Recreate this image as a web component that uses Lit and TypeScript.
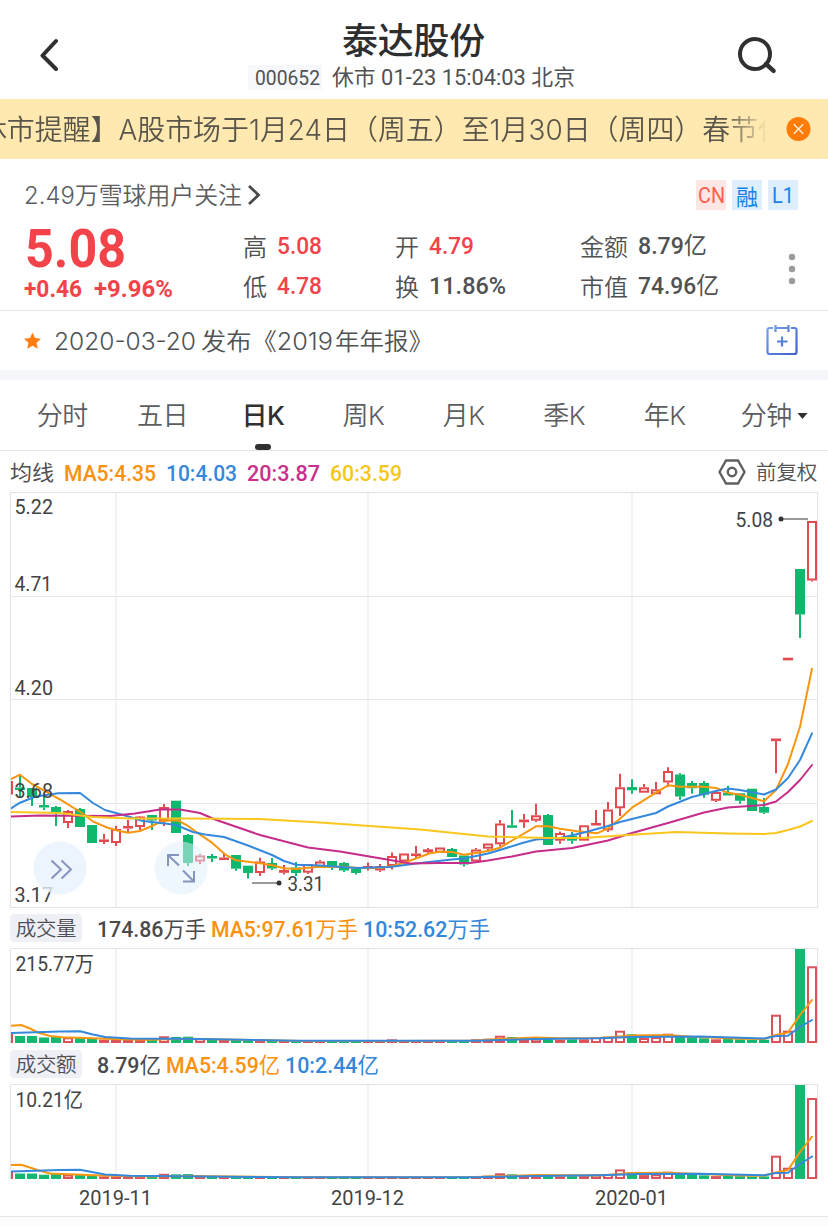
import { LitElement, html, svg, css } from "lit";
import { customElement, property } from "lit/decorators.js";

type Pt = [number, number];
// x centre, direction (r = up, g = down), high, body top, body bottom, low
type Candle = [number, "r" | "g", number, number, number, number];

const CANDLES: Candle[] = [
  [8, "r", 781, 781, 794.5, 794.5], [20, "g", 775, 787.5, 790, 798], [32, "g", 788, 788, 797, 806],
  [44, "g", 795, 805, 807.5, 810], [56, "g", 806, 807, 813.5, 826], [68, "r", 810, 811, 823, 828],
  [80, "g", 808, 809, 827, 827], [92, "g", 825, 825, 843, 843], [104, "r", 834, 839.5, 842, 844],
  [116, "r", 826, 829, 843, 846], [128, "r", 820, 826, 828.5, 832], [140, "r", 816, 816.5, 827, 830],
  [152, "g", 815, 815, 820.5, 830], [164, "r", 804, 807, 821, 826], [176, "g", 800.7, 800.7, 833, 833],
  [188, "g", 834, 835, 863, 866], [200, "r", 854, 855.5, 861.5, 864], [212, "g", 854, 856, 858.5, 862],
  [224, "r", 854, 857.5, 860, 860], [236, "g", 855, 855, 868.7, 870.7], [248, "g", 865.7, 865.7, 873, 878.5],
  [260, "r", 857.7, 861.5, 873, 876], [272, "g", 858, 863, 868.5, 870], [284, "r", 865, 870, 872.8, 874.5],
  [296, "g", 862, 867.5, 873, 876], [308, "r", 864, 864, 872.7, 874], [320, "r", 860, 861.5, 867, 867],
  [332, "g", 861, 861, 866.5, 870], [344, "g", 862, 863, 870.5, 872], [356, "g", 868, 869, 873, 874.5],
  [368, "r", 862.5, 866, 868.8, 870.5], [380, "r", 864, 866, 870.5, 872], [392, "r", 852.5, 856, 866, 869.5],
  [404, "r", 853.5, 853.5, 861.5, 861.5], [416, "r", 846, 853.5, 856, 859], [428, "r", 848, 849.3, 852.2, 854],
  [440, "r", 847.5, 847.5, 852.7, 852.7], [452, "g", 848, 849, 857, 857], [464, "g", 855.5, 855.5, 864.5, 866.5],
  [476, "r", 848, 849.5, 861.5, 861.5], [488, "r", 843.5, 843.5, 848.7, 852], [500, "r", 820, 823.5, 844.3, 846.5],
  [512, "g", 810, 825.3, 827.8, 827.8], [524, "r", 814, 819.5, 822.3, 827.7], [536, "r", 803.7, 815.3, 820.7, 822],
  [548, "g", 814, 815, 845, 845], [560, "r", 831.5, 833, 840.7, 843.7], [572, "g", 832, 835.7, 840.7, 843.7],
  [584, "r", 825.3, 825.3, 840.7, 840.7], [596, "r", 810, 823, 825.5, 825.5], [608, "r", 802, 809.5, 830.3, 832],
  [620, "r", 773.7, 787.3, 808.3, 816], [632, "g", 779.3, 787, 790.3, 793.7], [644, "r", 784, 787.3, 792.7, 792.7],
  [656, "r", 782, 789.3, 794.3, 794.3], [668, "r", 767.3, 771, 782.5, 787], [680, "g", 773, 774.5, 796.5, 799.7],
  [692, "g", 781, 783, 788.3, 793.7], [704, "g", 781, 783, 794.7, 797.7], [716, "r", 792, 792, 800.8, 802],
  [728, "g", 785.7, 792.7, 795.5, 795.5], [740, "g", 793, 793.3, 800.8, 803.7], [752, "g", 788.7, 788.7, 811, 811],
  [764, "g", 798, 807, 812.7, 814], [776, "r", 738.5, 738.5, 741.2, 773.3], [788, "r", 657.7, 657.7, 660.4, 660.4],
  [800, "g", 569, 569, 614.5, 638], [812, "r", 521, 521, 580.5, 581.5],
];

const MA5: Pt[] = [[11, 779], [20, 774.7], [32, 784], [44, 790.5], [62, 800.7], [82, 813], [93, 821.5], [105, 826.7], [117, 830.5], [128, 832.7], [140, 831], [152, 826], [162, 821], [178, 820.3], [187, 825.3], [203, 836.7], [212, 842.7], [225, 854.3], [236, 860.3], [260, 863.3], [272, 865.3], [284, 868.3], [296, 869], [317, 867], [343, 866.7], [360, 868], [380, 868], [393, 866], [407, 861.7], [430, 853.3], [440, 851.7], [452, 852], [464, 854.7], [477, 852.7], [488, 851], [500, 847.7], [513, 840], [536, 826.3], [548, 826.3], [560, 828.7], [577, 831.3], [597, 833.3], [608, 828.3], [620, 818.7], [632, 807.7], [656, 792.7], [668, 785.3], [680, 786.7], [704, 786.7], [716, 788], [728, 792.7], [740, 794.7], [752, 798], [764, 801.3], [776, 790], [788, 764], [800, 726.7], [812, 668.7]];
const MA10: Pt[] = [[11, 808.5], [20, 802.7], [35, 796.7], [58, 793.3], [80, 793], [93, 803], [105, 810], [125, 815.5], [143, 821], [165, 823.5], [176, 825], [193, 832], [205, 834.5], [224, 837], [248, 845.5], [272, 855], [284, 861], [296, 864.7], [320, 865.5], [356, 868], [390, 867], [420, 863], [452, 859.5], [464, 858.5], [488, 853.5], [500, 850], [524, 842.5], [536, 839.5], [560, 838], [584, 832.5], [608, 826], [620, 822], [656, 813], [668, 806.5], [692, 797], [716, 791], [728, 788.5], [740, 790], [764, 794.5], [776, 789.5], [788, 778], [800, 760], [812, 733.3]];
const MA20: Pt[] = [[11, 816.5], [40, 815.5], [110, 816], [135, 813.5], [160, 809.5], [180, 809.5], [200, 813], [215, 819.5], [260, 835], [308, 847.5], [340, 851.5], [390, 860], [410, 863.5], [440, 863], [470, 863], [488, 860.5], [512, 856.5], [536, 851.5], [572, 848], [608, 840.5], [632, 833], [668, 823], [704, 812.5], [728, 807.5], [764, 805], [776, 801.5], [788, 792], [800, 780], [812, 765]];
const MA60: Pt[] = [[11, 812], [60, 813], [93, 817], [130, 818.5], [188, 818.5], [260, 819], [320, 822.5], [420, 829.5], [488, 836.5], [548, 838], [584, 838], [620, 835.5], [676, 832], [728, 833.5], [764, 834], [776, 833], [788, 830], [800, 826.5], [812, 821]];

const VOL = [9, 7, 7, 5.5, 6.7, 5.7, 5.3, 4, 3.3, 3.3, 3, 3.3, 4.3, 6.7, 6, 6.3, 4.7, 4, 3.7, 3, 3, 3.7, 2.7, 2.3, 2.3, 2.3, 2, 2, 2, 2, 2, 2.2, 3.7, 2.3, 2.2, 2.2, 2.3, 2, 2.3, 3.7, 4.3, 7.3, 6, 4, 4.3, 4.3, 3.3, 3.7, 3.7, 6, 6.3, 12.3, 8.7, 5, 6, 9.3, 7, 5.7, 4.7, 3.7, 4, 3.7, 3.3, 3.3, 28.3, 12.3, 94, 76.7];
const AMT = VOL.map((v, i) => (i === 64 ? 23.3 : i === 65 ? 11.3 : i === 66 ? 94 : i === 67 ? 81 : Math.max(1.8, v * 0.78)));

// Sub-chart averages, in distances above the base line
const VMA5: Pt[] = [[11, 17.3], [21, 18], [30, 14.5], [38, 10.5], [50, 7], [62, 5.8], [100, 4.6], [120, 3.8], [150, 3.3], [188, 4.3], [250, 3], [300, 2], [400, 2], [476, 2.5], [500, 4], [536, 5.5], [560, 4.7], [600, 5], [632, 7.5], [668, 8], [692, 6.3], [740, 4.3], [764, 4], [776, 8], [788, 10.5], [800, 28], [812, 43]];
const VMA10: Pt[] = [[11, 10], [60, 11.5], [80, 11.7], [93, 8.5], [105, 6], [130, 4.5], [200, 4], [300, 2.2], [476, 2.3], [536, 4], [600, 4.7], [632, 6], [700, 6.5], [764, 4.5], [776, 7], [788, 7.3], [800, 16], [812, 23]];
const AMA5: Pt[] = [[11, 14], [21, 14.3], [30, 11.5], [38, 8.7], [50, 5.5], [100, 3.5], [150, 2.5], [188, 3], [300, 1.7], [476, 2], [536, 4], [600, 3.5], [632, 6], [668, 6.3], [740, 3.5], [764, 3.3], [776, 6.5], [788, 9], [800, 27], [812, 42.3]];
const AMA10: Pt[] = [[11, 7.5], [60, 9], [80, 9.2], [105, 4.5], [130, 3.2], [300, 1.7], [476, 1.8], [536, 3], [600, 3.7], [640, 5], [700, 5.3], [764, 3.8], [776, 6], [788, 6.3], [800, 15], [812, 22.5]];

const poly = (pts: Pt[], map: (y: number) => number = (y) => y) =>
  pts.map(([x, y]) => `${x},${map(y)}`).join(" ");

/** Han runs get their own tspan so they can be lighter than the numerals beside them. */
const runs = (text: string) =>
  text.split(/([\u4e00-\u9fff]+)/).filter(Boolean).map((part) =>
    /[\u4e00-\u9fff]/.test(part) ? svg`<tspan class="han">${part}</tspan>` : svg`<tspan>${part}</tspan>`);

const fit = (text: string, width: number, size: number, cls = "") => html`
  <svg class="fit ${cls}" width=${width} height=${size} font-size=${size}>
    <text x="-1" y=${size * 0.856} textLength=${width + 2} lengthAdjust="spacingAndGlyphs">${runs(text)}</text>
  </svg>`;

const mark = (text: string, x: number, cy: number, width: number, size = 21) => svg`
  <text x=${x - 0.5} y=${cy + size * 0.346} font-size=${size} textLength=${width + 1.5}
    lengthAdjust="spacingAndGlyphs" class="mark">${runs(text)}</text>`;

const shared = css`
  * { box-sizing: border-box; }
  svg { display: block; flex: none; }
  text { fill: currentColor; white-space: pre; }
  .fit { overflow: visible; }
  .din { font-family: Roboto, "Noto Sans CJK SC", sans-serif; font-weight: 500; }
  .din .han, .mark .han { font-weight: 400; }
  .bold { font-family: Roboto, sans-serif; font-weight: 700; }
  .plain { font-family: Inter, "Noto Sans CJK SC", sans-serif; font-weight: 350; }
  .mark { font-family: Roboto, "Noto Sans CJK SC", sans-serif; font-weight: 400; fill: #424244; }
  .regular { font-weight: 400; }
  .red { color: #f2434a; }
  .orange { color: #f8920f; }
  .blue { color: #3587da; }
  .magenta { color: #c8308c; }
  .yellow { color: #f6c719; }
`;

@customElement("stock-header")
class StockHeader extends LitElement {
  static styles = [shared, css`
    :host { display: flex; height: 99px; justify-content: space-between; padding: 0 52px 0 40px; }
    .back { margin-top: 38px; }
    .search { margin-top: 36px; overflow: visible; }
    .middle { display: flex; flex-direction: column; align-items: center; padding-left: 25px; }
    h1 { margin: 13px 0 0 6px; font: 500 36px/50px "Noto Sans CJK SC", sans-serif; color: #2d2e30; letter-spacing: -.3px; }
    .sub { display: flex; align-items: center; gap: 11px; height: 25px; margin-top: 2px; color: #505153; }
    .code { background: #f6f8fb; height: 25px; width: 74px; padding: 3px 0 0 8px; }
    .sub > svg { margin-top: 1px; }
  `];
  render() {
    return html`
      <svg class="back" width="20" height="34" fill="none" stroke="#2f3032" stroke-width="4" stroke-linecap="round" stroke-linejoin="round"><path d="M16 3 2.5 17.5 16 31"/></svg>
      <div class="middle">
        <h1>泰达股份</h1>
        <div class="sub">
          <div class="code">${fit("000652", 63, 19.5, "din regular")}</div>
          ${fit("休市 01-23 15:04:03 北京", 241, 21.5, "din regular")}
        </div>
      </div>
      <svg class="search" width="40" height="38" fill="none" stroke="#2f3032" stroke-width="4"><circle cx="19" cy="18" r="15"/><path d="m30 28 7.600 6.800" stroke-width="4.4" stroke-linecap="round"/></svg>`;
  }
}

@customElement("market-notice")
class MarketNotice extends LitElement {
  static styles = [shared, css`
    :host { display: flex; height: 60px; align-items: center; background: #ffe9b0; color: #59554b; }
    .clip { width: 766px; height: 60px; overflow: hidden; padding: 17px 0 0; margin-right: 19.5px;
      -webkit-mask-image: linear-gradient(90deg, #000 725px, transparent 768px); }
    .run { margin-left: -48px; }
  `];
  render() {
    return html`
      <div class="clip"><div class="run">${fit("【休市提醒】A股市场于1月24日（周五）至1月30日（周四）春节休", 833, 28, "plain")}</div></div>
      <svg width="25" height="25"><circle cx="12.5" cy="12" r="12" fill="#ff7c06"/><path d="m7.8 7.300 9.4 9.4m0-9.4-9.4 9.4" stroke="#fff0d8" stroke-width="1.4"/></svg>`;
  }
}

@customElement("stock-summary")
class StockSummary extends LitElement {
  static styles = [shared, css`
    :host { display: block; height: 152px; padding: 21px 30px 0 25px; border-bottom: 1px solid #e4e5e7; color: #505153; }
    .top { display: flex; align-items: center; height: 30px; gap: 6px; color: #5c5d5f; }
    .chev { margin-right: auto; }
    .tag { width: 30px; height: 30px; display: grid; place-items: center; font: 400 22px/30px "Noto Sans CJK SC", sans-serif; }
    .cn { background: #fee6e4; color: #fb604c; }
    .lv { background: #deeefc; color: #1583e9; }
    .body { display: grid; grid-template-columns: 218px 152px 185px 199px 17px; padding-top: 16px; }
    .price { display: flex; flex-direction: column; padding-top: 5px; }
    .delta { display: flex; gap: 14px; padding-top: 2px; }
    .stats { display: grid; grid-template-rows: 40px 40px; }
    .stat { display: flex; align-items: center; gap: 11px; }
    .label { font: 350 24px/36px "Noto Sans CJK SC", sans-serif; }
    .dots { margin: 26px 0 0 9px; }
    .big { margin-left: 1px; margin-top: -10px; }
  `];
  stat(label: string, value: string, width: number, cls = "") {
    return html`<div class="stat"><span class="label">${label}</span>${fit(value, width, 23.5, "din " + cls)}</div>`;
  }
  render() {
    return html`
      <div class="top">
        ${fit("2.49万雪球用户关注", 216, 24, "plain")}
        <svg class="chev" width="14" height="22" fill="none" stroke="#4a4b4d" stroke-width="2.8"><path d="m2 2 9.5 9L2 20"/></svg>
        <span class="tag cn">${fit("CN", 25, 22, "din regular")}</span><span class="tag lv">融</span><span class="tag lv">${fit("L1", 20, 22, "din regular")}</span>
      </div>
      <div class="body">
        <div class="price red">
          ${fit("5.08", 99, 54, "bold big")}
          <div class="delta">${fit("+0.46", 56, 23.5, "bold")}${fit("+9.96%", 77, 23.5, "bold")}</div>
        </div>
        <div class="stats">${this.stat("高", "5.08", 43, "red")}${this.stat("低", "4.78", 43, "red")}</div>
        <div class="stats">${this.stat("开", "4.79", 43, "red")}${this.stat("换", "11.86%", 75)}</div>
        <div class="stats">${this.stat("金额", "8.79亿", 67)}${this.stat("市值", "74.96亿", 79)}</div>
        <svg class="dots" width="8" height="34" fill="#9b9b9d"><circle cx="4" cy="5" r="3.2"/><circle cx="4" cy="17" r="3.2"/><circle cx="4" cy="29" r="3.2"/></svg>
      </div>`;
  }
}

@customElement("stock-event")
class StockEvent extends LitElement {
  static styles = [shared, css`
    :host { display: flex; align-items: center; height: 69px; padding: 0 30px 0 24px; border-bottom: 10px solid #f5f7fb; color: #505153; }
    .star { margin-right: 14px; }
    .title { display: flex; margin-top: 1px; }
    .what { margin-left: 7px; }
    .rest { margin-left: 4px; }
    .cal { margin-left: auto; margin-bottom: 2px; }
  `];
  render() {
    return html`
      <svg class="star" width="17" height="18" fill="#ff7e12"><path d="m8.5.5 2.5 5.6 6 .6-4.5 4.1 1.3 6-5.3-3.1-5.3 3.1 1.3-6L0 6.700l6-.6z"/></svg>
      <div class="title">
        ${fit("2020-03-20", 140, 24, "plain")}
        <span class="what">${fit("发布《2019", 130, 24, "plain")}</span>
        <span class="rest">${fit("年年报》", 96, 24, "plain")}</span>
      </div>
      <svg class="cal" width="32" height="32" fill="none" stroke="url(#g)" stroke-width="2.2">
        <defs><linearGradient id="g" gradientUnits="userSpaceOnUse" x1="0" y1="0" x2="32" y2="32"><stop offset="0" stop-color="#7ba7f4"/><stop offset="1" stop-color="#3a5cc4"/></linearGradient></defs>
        <path d="M7 4H3.500Q1.500 4 1.500 6v22q0 2 2 2h25q2 0 2-2V6q0-2-2-2H25M9.500 1v7M22.500 1v7M9.500 4h13M16 12.500v10M11 17.500h10.500"/></svg>`;
  }
}

@customElement("period-tabs")
class PeriodTabs extends LitElement {
  static styles = [shared, css`
    :host { display: flex; height: 71px; padding-left: 12px; border-bottom: 1px solid #e6e7e9; color: #5c5d5f; }
    .tab { width: 100.4px; display: flex; flex-direction: column; align-items: center; font: 350 26px/36px Inter, "Noto Sans CJK SC", sans-serif; padding-top: 18px; letter-spacing: -.5px; }
    .active { font-weight: 500; color: #2f3032; }
    .bar { width: 16px; height: 6px; border-radius: 3px; background: #2f3032; margin-top: 10px; }
    .menu { flex-direction: row; align-items: flex-start; padding-left: 26px; width: 112px; }
    .caret { margin: 14px 0 0 5px; }
  `];
  render() {
    return html`
      ${["分时", "五日", "日K", "周K", "月K", "季K", "年K"].map((t) => t === "日K"
        ? html`<div class="tab active">${t}<div class="bar"></div></div>` : html`<div class="tab">${t}</div>`)}
      <div class="tab menu">分钟<svg class="caret" width="11" height="8" fill="#2f3032"><path d="M.5 1h10L5.500 7z"/></svg></div>`;
  }
}

@customElement("kline-chart")
class KlineChart extends LitElement {
  static styles = [shared, css`
    :host { display: block; }
    .legend { display: flex; align-items: center; height: 41px; padding: 4px 11px 0; color: #505153; }
    .items { display: flex; gap: 12px; margin: -1px auto 0 0; }
    .hex { margin: -3px 10px 0 0; }
    .adj { font: 350 20.5px/30px "Noto Sans CJK SC", sans-serif; margin-top: -6px; letter-spacing: -.2px; }
  `];
  candle([x, c, hi, top, bot, lo]: Candle) {
    const color = c === "r" ? "#e24a50" : "#10b86e";
    const hollow = c === "r" && bot - top > 4;
    return svg`
      <g stroke=${color} stroke-width="2">
        ${hi < top ? svg`<path d="M${x} ${hi}V${top}"/>` : ""}
        ${lo > bot ? svg`<path d="M${x} ${bot}V${lo}"/>` : ""}
        ${hollow ? svg`<rect x=${x - 4} y=${top + 1} width="8" height=${bot - top - 2} fill="#fff"/>`
          : svg`<rect x=${x - 5} y=${top} width="10" height=${bot - top} fill=${color} stroke="none"/>`}
      </g>`;
  }
  render() {
    return html`
      <div class="legend">
        <div class="items">
          ${fit("均线", 42, 21, "din")}
          ${fit("MA5:4.35", 90, 22, "din orange")}${fit("10:4.03", 69, 22, "din blue")}${fit("20:3.87", 71, 22, "din magenta")}${fit("60:3.59", 70, 22, "din yellow")}
        </div>
        <svg class="hex" width="28" height="26" fill="none" stroke="#5f6062" stroke-width="2.4"><path d="M1.500 13 8 1.500h12L26.500 13 20 24.500H8z"/><circle cx="14" cy="13" r="4.200"/></svg>
        <span class="adj">前复权</span>
      </div>
      <svg width="828" height="416" viewBox="0 492 828 416">
        <defs><clipPath id="plot"><rect x="11" y="493" width="807" height="414"/></clipPath></defs>
        <path d="M116 493V907M368 493V907M632 493V907" stroke="#f1f2f3" stroke-width="2"/>
        <path d="M11 596.500H817M11 699.500H817M11 803.500H817" stroke="#e6e7e8"/>
        <rect x="10.500" y="492.500" width="807" height="415" fill="none" stroke="#e2e3e5"/>
        <g clip-path="url(#plot)">${CANDLES.map((c) => this.candle(c))}</g>
        <g fill="none" stroke-width="2" stroke-linejoin="round" stroke-linecap="round">
          <g clip-path="url(#plot)">
            <polyline points=${poly(MA5)} stroke="#f8960f"/>
            <polyline points=${poly(MA10)} stroke="#3589dc"/>
            <polyline points=${poly(MA20)} stroke="#c62c8a"/>
            <polyline points=${poly(MA60)} stroke="#fbc71d"/>
          </g>
        </g>
        ${mark("5.22", 15, 507, 37)}${mark("4.71", 15, 584, 36)}${mark("4.20", 15, 688, 37)}${mark("3.68", 15, 791, 37)}${mark("3.17", 15, 894.5, 37)}
        ${mark("5.08", 736, 519.5, 36)}${mark("3.31", 288, 883.500, 35)}
        <path d="M781 519H808M252 883H279" stroke="#77787a" stroke-width="1.500"/>
        <circle cx="781" cy="519" r="2.500" fill="#333"/><circle cx="279" cy="883" r="2.500" fill="#333"/>
        <g fill="#e7f3fd" fill-opacity=".5"><circle cx="60" cy="868" r="26.500" fill-opacity=".8"/><circle cx="181" cy="868" r="26.500" fill="#e0f0fe"/></g>
        <g fill="none" stroke="#8694bd" stroke-width="2">
          <path d="m51.500 860.500 9.500 9-9.500 9M61.500 860.500l9.500 9-9.500 9"/>
          <path d="M168 866V855h11M168 855l11 10.500M194 871v10.500h-11M194 881.500l-11-11"/>
        </g>
      </svg>`;
  }
}

@customElement("sub-chart")
class SubChart extends LitElement {
  @property() name = "";
  @property({ attribute: false }) items: [string, number, string][] = [];
  @property({ attribute: false }) bars: number[] = [];
  @property({ attribute: false }) ma5: Pt[] = [];
  @property({ attribute: false }) ma10: Pt[] = [];
  @property() peak = "";
  @property({ type: Number }) peakWidth = 0;
  static styles = [shared, css`
    :host { display: block; color: #4a4a4c; }
    .legend { display: flex; align-items: center; height: 40px; padding-left: 10px; gap: 7px; }
    .legend > svg { margin-top: 2px; }
    .chip { width: 72px; height: 28px; margin-right: 9px; border-radius: 4px; background: #eff0f5; text-align: center; font: 350 20.500px/27px "Noto Sans CJK SC", sans-serif; color: #4e4f54; letter-spacing: -.3px; }
  `];
  render() {
    return html`
      <div class="legend"><span class="chip">${this.name}</span>${this.items.map(([t, w, c]) => fit(t, w, 22, "din " + c))}</div>
      <svg width="828" height="96">
        <defs><clipPath id="plot"><rect x="11" y="1" width="807" height="95"/></clipPath></defs>
        <path d="M116 1V95M368 1V95M632 1V95" stroke="#f1f2f3" stroke-width="2"/>
        <path d="M10.500 95V.5H817.500V95" fill="none" stroke="#e2e3e5"/>
        <g clip-path="url(#plot)">
          ${this.bars.map((h, i) => {
            const x = 8 + 12 * i;
            const up = CANDLES[i][1] === "r";
            return up && h > 3.500
              ? svg`<rect x=${x - 4} y=${96 - h} width="8" height=${h - 2} fill="#fff" stroke="#da525a" stroke-width="2"/>`
              : svg`<rect x=${x - 5} y=${95 - h} width="10" height=${h} fill=${up ? "#da525a" : "#14b870"}/>`;
          })}
          <g fill="none" stroke-width="2" stroke-linejoin="round" stroke-linecap="round">
            <polyline points=${poly(this.ma5, (y) => 95 - y)} stroke="#f8960f"/>
            <polyline points=${poly(this.ma10, (y) => 95 - y)} stroke="#3589dc"/>
          </g>
        </g>
        ${mark(this.peak, 16, 15.500, this.peakWidth)}
      </svg>`;
  }
}

@customElement("app-root")
class AppRoot extends LitElement {
  static styles = [shared, css`
    :host { display: block; width: 828px; height: 1226px; overflow: hidden; background: #fff; font-family: "Noto Sans CJK SC", sans-serif; }
    .axis { display: flex; height: 37px; padding: 7px 0 0 80px; border-bottom: 1px solid #e4e5e7; color: #424345; gap: 181px; }
    .axis svg:last-child { margin-left: 12px; }
    .foot { height: 9px; background: #fcfcfd; }
  `];
  render() {
    return html`
      <stock-header></stock-header>
      <market-notice></market-notice>
      <stock-summary></stock-summary>
      <stock-event></stock-event>
      <period-tabs></period-tabs>
      <kline-chart></kline-chart>
      <sub-chart name="成交量" peak="215.77万" .peakWidth=${77} .bars=${VOL} .ma5=${VMA5} .ma10=${VMA10}
        .items=${[["174.86万手", 107, ""], ["MA5:97.61万手", 145, "orange"], ["10:52.62万手", 125, "blue"]]}></sub-chart>
      <sub-chart name="成交额" peak="10.21亿" .peakWidth=${66} .bars=${AMT} .ma5=${AMA5} .ma10=${AMA10}
        .items=${[["8.79亿", 62, ""], ["MA5:4.59亿", 112, "orange"], ["10:2.44亿", 92, "blue"]]}></sub-chart>
      <div class="axis">${fit("2019-11", 71, 20.5, "din regular")}${fit("2019-12", 71, 20.5, "din regular")}${fit("2020-01", 71, 20.5, "din regular")}</div>
      <div class="foot"></div>`;
  }
}
